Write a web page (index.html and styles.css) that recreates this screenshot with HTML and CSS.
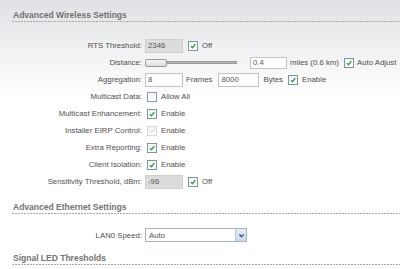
FILE: index.html
```html
<!DOCTYPE html>
<html>
<head>
<meta charset="utf-8">
<link rel="stylesheet" href="styles.css">
</head>
<body>
<div class="page">
  <h2 class="title">Advanced Wireless Settings</h2>
  <div class="rows">
    <div class="row">
      <span class="label">RTS Threshold:</span>
      <div class="ctrl">
        <span class="inp inp-short inp-dis">2346</span>
        <span class="cb cb-after-inp"><svg viewBox="0 0 10 10"><path d="M2.3 5.1 L4.3 7.2 L7.9 2.6"/></svg></span>
        <span class="txt">Off</span>
      </div>
    </div>
    <div class="row">
      <span class="label">Distance:</span>
      <div class="ctrl">
        <div class="slider"><span class="handle"></span><span class="track"></span></div>
        <span class="inp inp-dist">0.4</span>
        <span class="txt txt-tight">miles (0.6 km)</span>
        <span class="cb cb-after-txt"><svg viewBox="0 0 10 10"><path d="M2.3 5.1 L4.3 7.2 L7.9 2.6"/></svg></span>
        <span class="txt txt-tight">Auto Adjust</span>
      </div>
    </div>
    <div class="row">
      <span class="label">Aggregation:</span>
      <div class="ctrl">
        <span class="inp inp-short">8</span>
        <span class="txt txt-tight">Frames</span>
        <span class="inp inp-bytes">8000</span>
        <span class="txt">Bytes</span>
        <span class="cb cb-after-txt"><svg viewBox="0 0 10 10"><path d="M2.3 5.1 L4.3 7.2 L7.9 2.6"/></svg></span>
        <span class="txt">Enable</span>
      </div>
    </div>
    <div class="row">
      <span class="label">Multicast Data:</span>
      <div class="ctrl">
        <span class="cb cb-lead cb-off"></span>
        <span class="txt">Allow All</span>
      </div>
    </div>
    <div class="row">
      <span class="label">Multicast Enhancement:</span>
      <div class="ctrl">
        <span class="cb cb-lead"><svg viewBox="0 0 10 10"><path d="M2.3 5.1 L4.3 7.2 L7.9 2.6"/></svg></span>
        <span class="txt">Enable</span>
      </div>
    </div>
    <div class="row">
      <span class="label">Installer EIRP Control:</span>
      <div class="ctrl">
        <span class="cb cb-lead cb-dis"><svg viewBox="0 0 10 10"><path d="M2.3 5.1 L4.3 7.2 L7.9 2.6"/></svg></span>
        <span class="txt">Enable</span>
      </div>
    </div>
    <div class="row">
      <span class="label">Extra Reporting:</span>
      <div class="ctrl">
        <span class="cb cb-lead"><svg viewBox="0 0 10 10"><path d="M2.3 5.1 L4.3 7.2 L7.9 2.6"/></svg></span>
        <span class="txt">Enable</span>
      </div>
    </div>
    <div class="row">
      <span class="label">Client Isolation:</span>
      <div class="ctrl">
        <span class="cb cb-lead"><svg viewBox="0 0 10 10"><path d="M2.3 5.1 L4.3 7.2 L7.9 2.6"/></svg></span>
        <span class="txt">Enable</span>
      </div>
    </div>
    <div class="row">
      <span class="label">Sensitivity Threshold, dBm:</span>
      <div class="ctrl">
        <span class="inp inp-short inp-dis">-96</span>
        <span class="cb cb-after-inp"><svg viewBox="0 0 10 10"><path d="M2.3 5.1 L4.3 7.2 L7.9 2.6"/></svg></span>
        <span class="txt">Off</span>
      </div>
    </div>
  </div>

  <h2 class="title title-next">Advanced Ethernet Settings</h2>
  <div class="rows rows-eth">
    <div class="row">
      <span class="label">LAN0 Speed:</span>
      <div class="ctrl">
        <div class="select"><span class="sel-val">Auto</span><span class="sel-btn"><svg viewBox="0 0 8 8"><path d="M1.6 2.8 L4 5.2 L6.4 2.8"/></svg></span></div>
      </div>
    </div>
  </div>

  <h2 class="title title-last">Signal LED Thresholds</h2>
</div>
</body>
</html>
```

FILE: styles.css
```css
html, body {
  margin: 0;
  padding: 0;
}
body {
  width: 400px;
  height: 269px;
  overflow: hidden;
  background: linear-gradient(#dfe1e4 0px, #eceef0 40px, #fafafa 80px, #ffffff 100px);
  font-family: "Liberation Sans", Arial, sans-serif;
  font-size: 7.8px;
  color: #505050;
}
.page {
  padding-top: 9px;
}
.title {
  margin: 0 0 0 12px;
  height: 12px;
  line-height: 12px;
  font-size: 8.5px;
  font-weight: bold;
  color: #727272;
  padding-left: 1px;
  background: repeating-linear-gradient(to right, #a9a9a9 0 2px, transparent 2px 3px) left bottom / 100% 1px no-repeat;
  padding-bottom: 1px;
}
.title-next {
  margin-top: 11px;
}
.title-last {
  margin-top: 10px;
}
.rows {
  margin-top: 15px;
  display: flex;
  flex-direction: column;
}
.rows-eth {
  margin-top: 14px;
}
.row {
  display: flex;
  align-items: center;
  height: 17px;
}
.rows-eth .row {
  height: 14px;
}
.label {
  width: 142px;
  text-align: right;
  flex: none;
  white-space: nowrap;
}
.ctrl {
  display: flex;
  align-items: center;
  margin-left: 3px;
}
.txt {
  margin-left: 4px;
  white-space: nowrap;
}
.txt-tight {
  margin-left: 3px;
}
.inp {
  box-sizing: border-box;
  height: 14px;
  line-height: 12px;
  border: 1px solid #c3c3c3;
  background: #fff;
  padding-left: 2px;
  color: #555;
}
.inp-short {
  width: 38px;
}
.inp-dis {
  background: #dcdcdc;
  border-color: #cfcfcf;
}
.inp-dist {
  width: 37px;
  height: 12px;
  line-height: 10px;
  margin-left: 13px;
}
.inp-bytes {
  width: 41px;
  margin-left: 6px;
}
.cb {
  box-sizing: border-box;
  width: 10px;
  height: 10px;
  border: 1px solid #7f93a5;
  background: linear-gradient(#f2f4f6, #ffffff);
  display: flex;
  align-items: center;
  justify-content: center;
  flex: none;
}
.cb svg {
  width: 8px;
  height: 8px;
  fill: none;
  stroke: #2e9a3a;
  stroke-width: 1.6;
}
.cb-after-inp {
  margin-left: 5px;
}
.cb-after-txt {
  margin-left: 5px;
}
.cb-lead {
  margin-left: 2px;
}
.cb-off {
  border-color: #8c9aa8;
}
.cb-dis {
  border-color: #d3d7db;
}
.cb-dis svg {
  stroke: #c3c8cc;
  stroke-width: 1.2;
}
.slider {
  position: relative;
  width: 92px;
  height: 10px;
  display: flex;
  align-items: center;
}
.handle {
  box-sizing: border-box;
  width: 22px;
  height: 8px;
  border: 1px solid #9a9a9a;
  border-radius: 2px;
  background: linear-gradient(#f4f4f4, #dedede);
  flex: none;
}
.track {
  box-sizing: border-box;
  flex: 1;
  height: 3px;
  background: #b8b8b8;
  border: 1px solid #999;
  border-left: none;
}
.select {
  box-sizing: border-box;
  width: 102px;
  height: 14px;
  border: 1px solid #a8b3bf;
  background: #fff;
  display: flex;
  align-items: center;
  justify-content: space-between;
}
.sel-val {
  padding-left: 3px;
}
.sel-btn {
  box-sizing: border-box;
  width: 11px;
  height: 12px;
  border-left: 1px solid #b9c7d6;
  background: linear-gradient(#e6eef8, #c9d7e8);
  display: flex;
  align-items: center;
  justify-content: center;
}
.sel-btn svg {
  width: 7px;
  height: 7px;
  fill: none;
  stroke: #3c4f6b;
  stroke-width: 1.5;
}
```
